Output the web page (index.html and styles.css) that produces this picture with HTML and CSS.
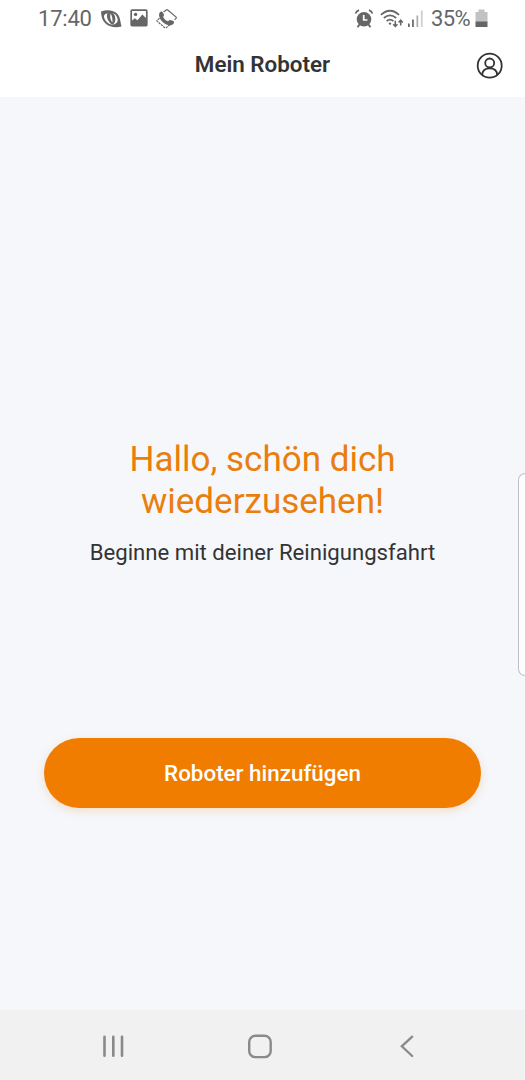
FILE: index.html
```html
<!DOCTYPE html>
<html lang="de">
<head>
<meta charset="utf-8">
<title>Mein Roboter</title>
<link rel="stylesheet" href="styles.css">
</head>
<body>
<div class="status">
  <div class="status-group">
    <span class="time">17:40</span>
    <svg class="ico-eye" width="22" height="20" viewBox="0 0 22 20">
      <path fill="#666" d="M0 2.500C4 1 8 1 11.500 1.900 16.500 3.300 18.800 7 19.200 11.500L20.500 17.500C15 18.900 8.500 18.200 4.500 14.500 1.500 12 .2 8 0 2.500Z"/>
      <path fill="#fff" d="M6 4.500C3.500 5 2.300 6.500 3.300 9.200 4.500 12.500 7.500 15 11 15.700 15.300 15.500 17.200 12.800 16.600 9.800 16 7 14.300 5 12 4.200Q9 3.500 6 4.500Z"/>
      <path fill="#666" d="M6.500 4.300C5 7.500 6.500 12.500 11.200 15.800 15 14.500 15.300 7.500 12.300 4.200Q9 3.300 6.500 4.300Z"/>
      <path fill="#fff" d="M9.600 4.500C11.300 7 11.700 11 11.400 13.500 9.500 11.500 8.600 8 9.600 4.500Z"/>
    </svg>
    <svg class="ico-image" width="18" height="18" viewBox="0 0 18 18">
      <rect x="1.200" y="1.200" width="15.600" height="15.400" rx=".8" fill="#fff" stroke="#666" stroke-width="1.700"/>
      <circle cx="5.600" cy="5.400" r="1.700" fill="#666"/>
      <path fill="#666" d="M1.200 12.200 4.800 9.200 7.500 11.200 12.300 5.600 16.800 9.700V16.600H1.200Z"/>
    </svg>
    <svg class="ico-call" width="22" height="20" viewBox="0 0 22 20">
      <path fill="none" stroke="#666" stroke-width="1.200" stroke-linejoin="round" d="M7.500 3 10.300 .9Q11 .5 11.700 1L19.900 7.900Q20.700 8.600 20 9.400L18.600 10.700"/>
      <path fill="none" stroke="#666" stroke-width="1.200" stroke-dasharray="2.200 .8" d="M3.500 9.300 1.200 11.200Q.7 11.800 1.300 12.400L8.800 18.700Q9.600 19.200 10.300 18.600L14.500 15.300"/>
      <path fill="#666" d="M5.100 2.500C6.300 2.300 7.700 4.400 8 6 8.100 6.900 7.200 7.300 7.200 7.900 7.800 9.800 9.800 11.500 11.800 12.200 12.700 12.200 13 11.100 13.800 11 15.600 11.200 18.100 12 18.200 13.100 18 15.300 15.700 16.500 13.700 16.300 8.300 15.500 4 11.500 3.100 6.700 2.800 4.700 3.700 3 5.100 2.500Z"/>
    </svg>
  </div>
  <div class="status-group">
    <svg class="ico-alarm" width="20" height="20" viewBox="0 0 20 20">
      <circle cx="10" cy="10.300" r="7.300" fill="#666"/>
      <path d="M1.500 4.500Q2.500 2 5 1.100M18.500 4.500Q17.500 2 15 1.100" fill="none" stroke="#666" stroke-width="1.800"/>
      <path d="M5.500 15.500 3.500 18.300M14.500 15.500 16.500 18.300" stroke="#666" stroke-width="1.900"/>
      <path d="M9.700 6V11H13.400" fill="none" stroke="#fff" stroke-width="1.700"/>
    </svg>
    <svg class="ico-wifi" width="24" height="20" viewBox="0 0 24 20">
      <g fill="none" stroke="#666" stroke-width="1.700">
        <path d="M.9 5.800Q10 -2.300 19.100 5.800"/>
        <path d="M3.800 9Q10 3.700 16.200 9"/>
        <path d="M6.600 12Q10 9.400 13.400 12"/>
      </g>
      <circle cx="10" cy="14.600" r="1.200" fill="#666"/>
      <path d="M15.300 11.800V17M13.200 15.200 15.300 17.500 17.400 15.200M20.700 16.500V11.500M18.600 13.500 20.700 11.200 22.800 13.500" fill="none" stroke="#666" stroke-width="1.500"/>
    </svg>
    <svg class="ico-signal" width="18" height="20" viewBox="0 0 18 20">
      <path fill="#666" d="M0 14.500H1.700V18H0ZM4.100 10.500H5.800V18H4.100Z"/>
      <path fill="#aaa" d="M8.500 6.500H10.200V18H8.500Z"/>
      <path fill="#d0d0d0" d="M12.800 1.500H14.700V18H12.800Z"/>
    </svg>
    <span class="percent">35%</span>
    <svg class="ico-battery" width="14" height="20" viewBox="0 0 14 20">
      <path fill="#c2c2c2" d="M3.500 .5H9.500V3H12.500V13H.5V3H3.500Z"/>
      <path fill="#666" d="M.5 12.500H12.500V17.500Q12.500 18 12 18H1Q.5 18 .5 17.500Z"/>
    </svg>
  </div>
</div>
<header class="appbar">
  <h1 class="title">Mein Roboter</h1>
  <svg class="profile" width="28" height="28" viewBox="0 0 28 28" fill="none" stroke="#333" stroke-width="1.800">
    <circle cx="13.700" cy="13.700" r="12"/>
    <circle cx="13.700" cy="11" r="4.500"/>
    <path d="M6.200 22.900C6.400 18.600 9.200 16.300 13.700 16.300S21 18.600 21.200 22.900"/>
  </svg>
</header>
<main class="content">
  <h2 class="greeting">Hallo, schön dich<br>wiederzusehen!</h2>
  <p class="hint">Beginne mit deiner Reinigungsfahrt</p>
  <button class="add">Roboter hinzufügen</button>
  <div class="edge-handle"></div>
</main>
<nav class="navbar">
  <svg width="28" height="28" viewBox="0 0 28 28" fill="none" stroke="#8a8a8a" stroke-width="2.600" stroke-linecap="round"><path d="M5.500 4.800V23.700M14.300 4.800V23.700M23 4.800V23.700"/></svg>
  <svg width="28" height="28" viewBox="0 0 28 28" fill="none" stroke="#8a8a8a" stroke-width="2.400"><rect x="3.200" y="3.800" width="21.500" height="21.300" rx="6.200"/></svg>
  <svg width="28" height="28" viewBox="0 0 28 28" fill="none" stroke="#8a8a8a" stroke-width="2.300" stroke-linecap="round"><path d="M19.200 4.700 8.800 14.300 19.200 24"/></svg>
</nav>
</body>
</html>
```

FILE: styles.css
```css
* {
  box-sizing: border-box;
}

body {
  margin: 0;
  height: 1080px;
  display: flex;
  flex-direction: column;
  overflow: hidden;
  background: #f5f7fb;
  font-family: Roboto, "Liberation Sans", sans-serif;
  color: #333;
}

svg {
  display: block;
  flex: none;
}

.status {
  height: 38px;
  padding: 0 36px 0 38px;
  display: flex;
  justify-content: space-between;
  background: #fff;
  color: #666;
  font-size: 22px;
  line-height: 38px;
}

.status-group {
  display: flex;
  align-items: flex-start;
}

.status svg {
  margin-top: 9px;
}

.time {
  width: 63px;
  letter-spacing: -0.2px;
}

.ico-image {
  margin-left: 7px;
}

.ico-call {
  margin-left: 8px;
}

.ico-wifi {
  margin-left: 6px;
}

.ico-signal {
  margin-left: 4px;
}

.percent {
  width: 44px;
  margin-left: 5px;
  letter-spacing: -0.6px;
}

.appbar {
  height: 59px;
  padding: 0 21px;
  display: grid;
  grid-template-columns: 28px 1fr 28px;
  background: #fff;
}

.title {
  grid-column: 2;
  margin: 0;
  font-size: 22.4px;
  font-weight: 600;
  line-height: 53px;
  text-align: center;
}

.profile {
  margin-top: 14px;
}

.content {
  position: relative;
  flex: 1;
  padding: 342px 44px 0;
  text-align: center;
}

.greeting {
  margin: 0;
  color: #ea7d0c;
  font-size: 35px;
  font-weight: 400;
  line-height: 42px;
}

.hint {
  margin: 16px 0 0;
  font-size: 22.15px;
  line-height: 26px;
}

.add {
  display: block;
  width: 437px;
  height: 69.5px;
  margin-top: 173px;
  padding: 0;
  border: 0;
  border-radius: 35px;
  background: #f07d00;
  box-shadow: 0 3px 10px rgba(240, 125, 0, 0.2);
  color: #fff;
  font: 500 22.4px Roboto, "Liberation Sans", sans-serif;
}

.edge-handle {
  position: absolute;
  top: 376px;
  right: 0;
  width: 7px;
  height: 203px;
  border: 1px solid #bfc0c5;
  border-right: 0;
  border-radius: 8px 0 0 8px;
  background: #fdfdfd;
}

.navbar {
  height: 70px;
  padding: 1px 104px 0 99px;
  display: flex;
  justify-content: space-between;
  align-items: center;
  background: #f1f1f1;
}
```
